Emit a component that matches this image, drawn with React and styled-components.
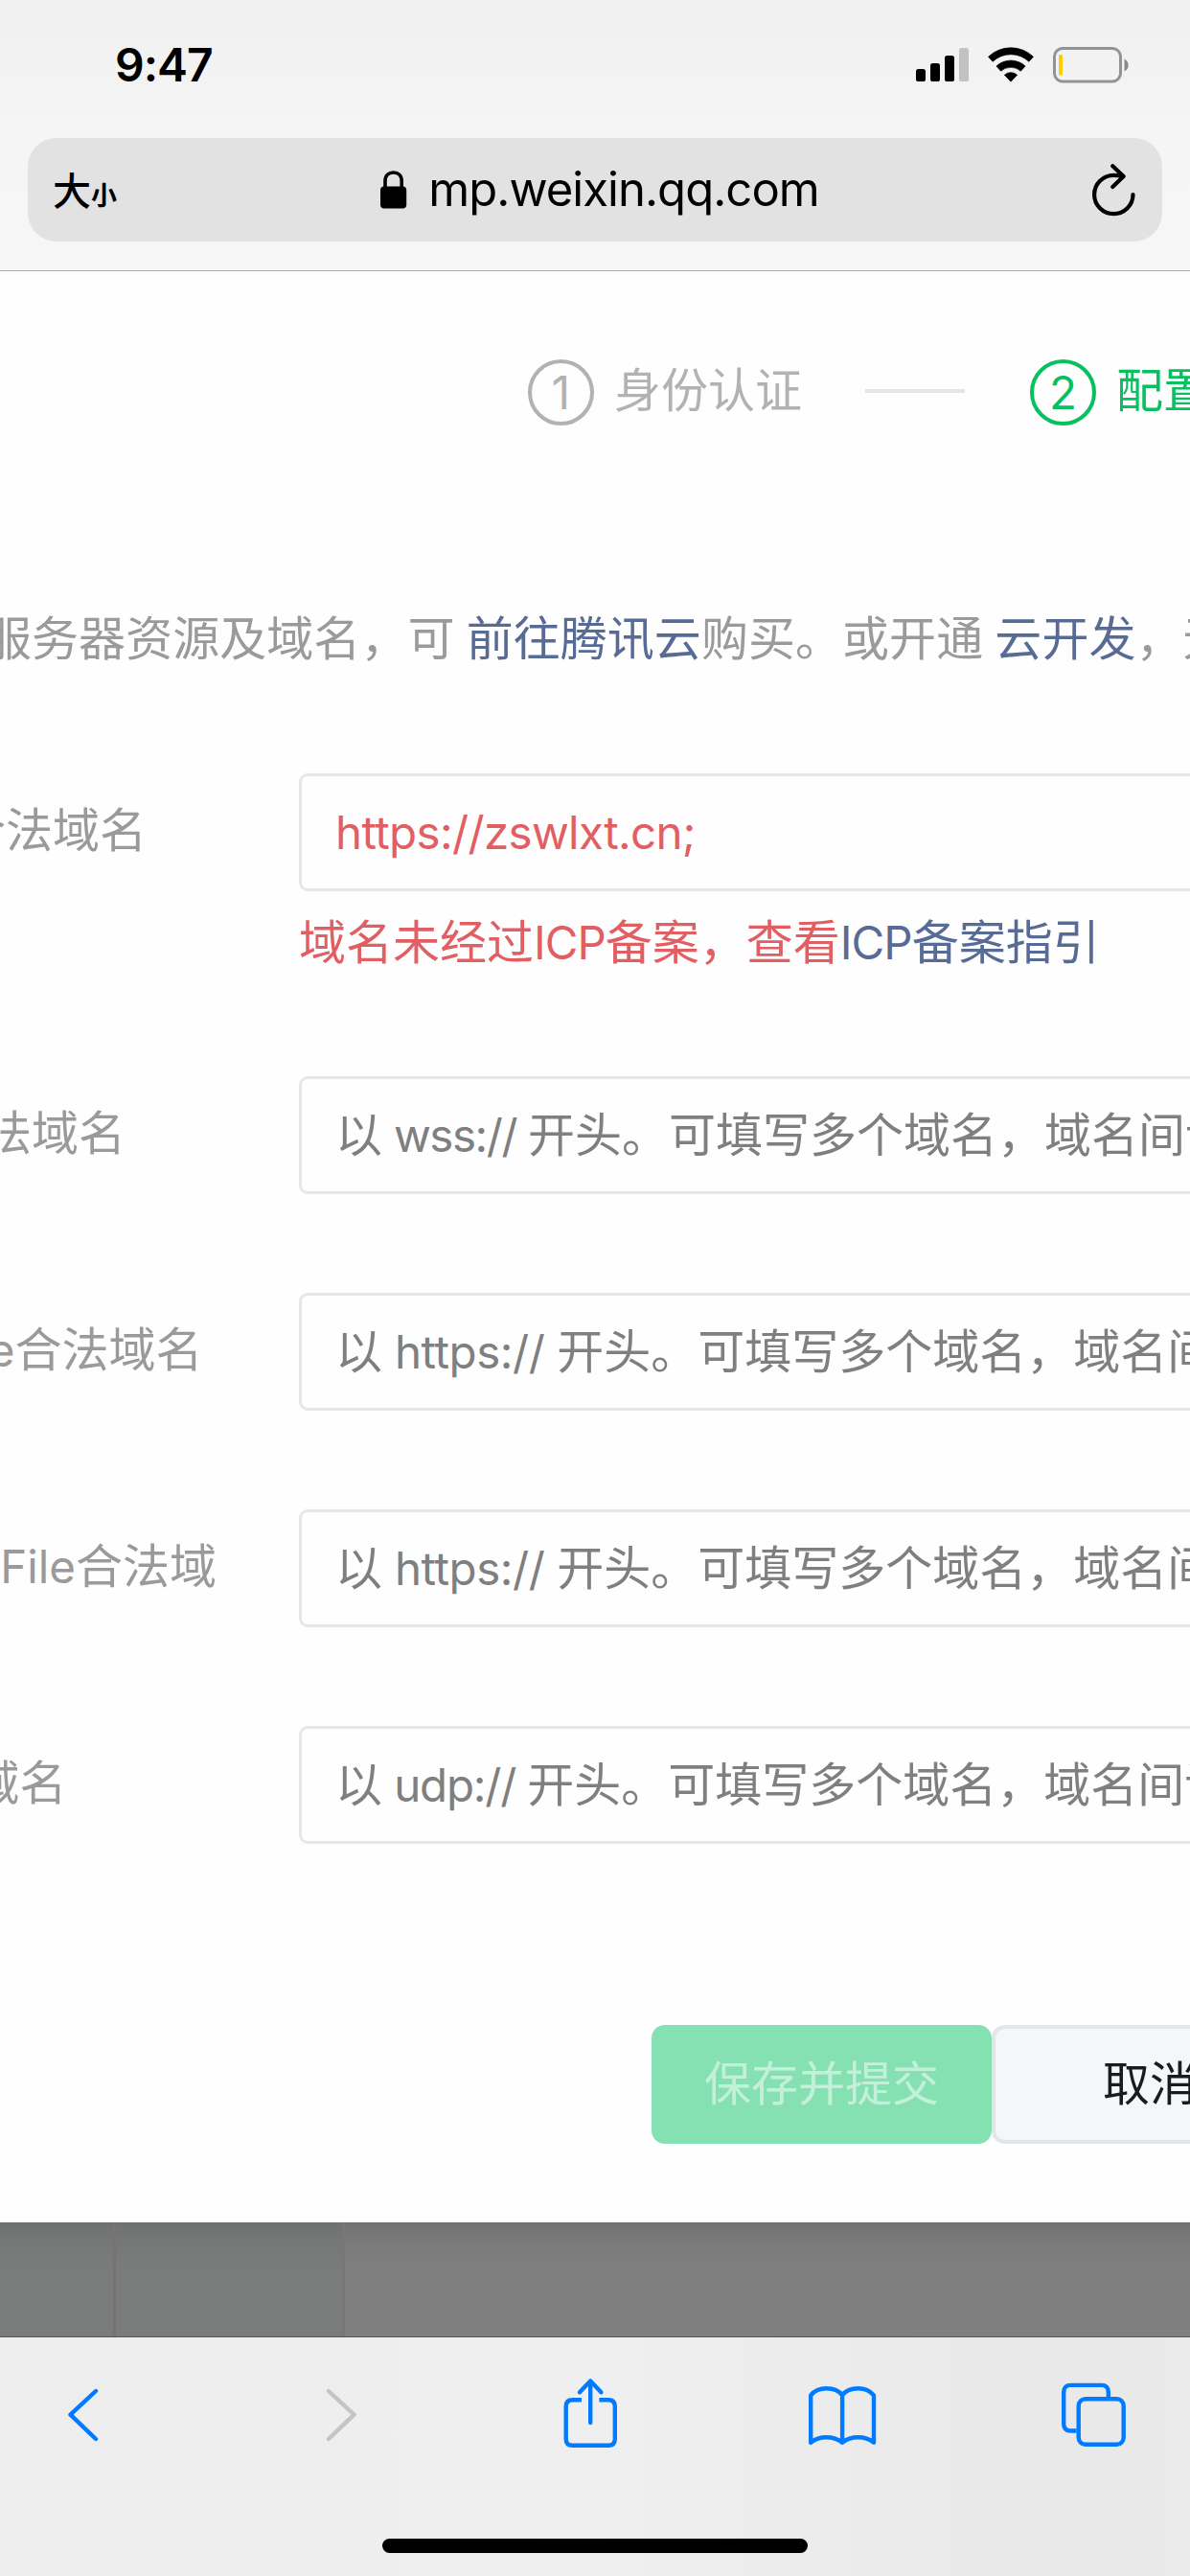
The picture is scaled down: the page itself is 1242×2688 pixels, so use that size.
import React from "react";
import styled, { createGlobalStyle } from "styled-components";

const Global = createGlobalStyle`
  * { box-sizing: border-box; }
  html, body { margin: 0; padding: 0; overflow: hidden; }
  body {
    font-family: Inter, "Noto Sans CJK SC", sans-serif;
    font-size: 49px;
    line-height: 68px;
    background: #fefefe;
  }
`;

const Screen = styled.div`
  width: 1242px;
  height: 2688px;
  overflow: hidden;
  display: flex;
  flex-direction: column;
`;

/* ---------- browser header ---------- */
const Header = styled.header`
  flex: none;
  height: 283px;
  border-bottom: 1px solid #b0b0b1;
  background: linear-gradient(#f0f0f0, #f5f5f5 50%, #f7f7f7);
`;

const StatusBar = styled.div`
  height: 144px;
  display: flex;
  align-items: flex-start;
  justify-content: space-between;
  padding: 34px 62px 0 120px;
`;

const Clock = styled.span`
  font-size: 48px;
  font-weight: 600;
  letter-spacing: -1px;
  color: #000;
`;

const StatusIcons = styled.div`
  display: flex;
  align-items: center;
  padding-top: 15px;
  gap: 20px;
`;

const AddressBar = styled.div`
  margin: 0 29px;
  height: 108px;
  border-radius: 30px;
  background: #e2e2e2;
  display: grid;
  grid-template-columns: 200px 1fr 200px;
  align-items: center;
  color: #000;
`;

const TextSize = styled.div`
  padding: 3px 0 0 26px;
  font-family: "Noto Sans CJK SC", sans-serif;
  font-weight: 500;
  font-size: 40px;
  white-space: nowrap;
`;

const SmallGlyph = styled.span`
  font-size: 27px;
  font-weight: 700;
`;

const Domain = styled.div`
  display: flex;
  align-items: center;
  justify-content: center;
  gap: 22px;
  padding-left: 10px;
  font-size: 49px;
  letter-spacing: -0.95px;
`;

const ReloadSlot = styled.div`
  display: flex;
  justify-content: flex-end;
  padding: 6px 26px 0 0;
`;

/* ---------- page ---------- */
const Page = styled.main`
  flex: none;
  height: 2036px;
  background: #fefefe;
  overflow: hidden;
  white-space: nowrap;
`;

const Steps = styled.div`
  display: flex;
  align-items: center;
  height: 69px;
  margin: 92px 0 0 551px;
  width: max-content;
`;

const StepNumber = styled.span`
  width: 69px;
  height: 69px;
  border-radius: 50%;
  border: 4px solid currentColor;
  display: flex;
  align-items: center;
  justify-content: center;
  font-size: 47.5px;
`;

const Step = styled.div`
  display: flex;
  align-items: center;
  gap: 21px;
  height: 69px;
  color: ${(p) => (p.$active ? "#07c160" : "#b2b2b2")};
`;

const StepName = styled.span`
  margin-top: -4px;
`;

const StepLine = styled.span`
  width: 104px;
  height: 4px;
  margin: 0 68px 3px 66px;
  background: #e4e5e5;
`;

const Notice = styled.p`
  margin: 189px 0 0 -16px;
  color: #9a9a9a;
  letter-spacing: 0.05px;
  word-spacing: -1.7px;
`;

const Link = styled.a`
  color: #576b95;
`;

const Form = styled.div`
  margin-top: 106px;
`;

const Row = styled.div`
  display: flex;
  align-items: flex-start;
  height: ${(p) => p.$height}px;
`;

const LabelCell = styled.div`
  flex: none;
  width: 572px;
  margin-left: -260px;
`;

const Label = styled.div`
  width: ${(p) => p.$end + 260}px;
  line-height: 119px;
  text-align: right;
  color: #9a9a9a;
`;

const Latin = styled.span`
  font-size: 47.5px;
  letter-spacing: ${(p) => p.$spacing || 0}px;
`;

const Field = styled.div`
  flex: none;
  width: 1100px;
`;

const Input = styled.div`
  height: 123px;
  border: 3px solid #e7e7eb;
  border-radius: 9px;
  padding: 0 0 0 35px;
  line-height: 118px;
  color: ${(p) => (p.$error ? "#e15f63" : "#7f7f7f")};
`;

const ErrorText = styled.div`
  margin-top: 20px;
  color: #e15f63;
`;

const Actions = styled.div`
  display: flex;
  margin: 86px 0 0 680px;
  width: max-content;
`;

const Button = styled.div`
  height: 124px;
  width: ${(p) => p.$width}px;
  border-radius: 14px;
  line-height: ${(p) => (p.$primary ? 124 : 116)}px;
  text-align: center;
  border: ${(p) => (p.$primary ? "none" : "4px solid #e4e5e7")};
  background: ${(p) => (p.$primary ? "#85e1b1" : "#f5f6f8")};
  color: ${(p) => (p.$primary ? "#c3f0d8" : "#1a1b1c")};
`;

/* ---------- dimmed page behind the dialog ---------- */
const Backdrop = styled.div`
  flex: none;
  height: 120px;
  display: flex;
  border-bottom: 1px solid #555656;
  background: linear-gradient(rgba(0, 0, 0, 0.1), rgba(0, 0, 0, 0.03) 24px, rgba(0, 0, 0, 0) 48px), #7f7f7f;
`;

const BackdropColumn = styled.div`
  width: ${(p) => p.$width}px;
  border-right: 3px solid ${(p) => p.$edge};
  background: linear-gradient(rgba(0, 0, 0, 0.09), rgba(0, 0, 0, 0.03) 24px, rgba(0, 0, 0, 0) 48px), #7a7c7b;
`;

/* ---------- browser toolbar ---------- */
const Toolbar = styled.footer`
  flex: 1;
  display: flex;
  flex-direction: column;
  align-items: center;
  background: linear-gradient(90deg, #ededed, #efefef 50%, #e9e9e9 85%, #eaeaea);
`;

const ToolbarIcons = styled.nav`
  width: 100%;
  height: 210px;
  padding: 36px 0 0 66px;
  display: flex;
  align-items: flex-start;
`;

const ToolIcon = styled.svg`
  flex: none;
  width: ${(p) => p.$width}px;
  height: 90px;
  margin-left: ${(p) => p.$gap || 0}px;
  fill: none;
  stroke: ${(p) => (p.$disabled ? "#c4c4c4" : "#007aff")};
  stroke-width: 4.4;
  stroke-linecap: round;
  stroke-linejoin: round;
`;

const HomeIndicator = styled.div`
  width: 444px;
  height: 15px;
  border-radius: 8px;
  background: #000;
`;

const Signal = () => (
  <svg width="55" height="38" viewBox="0 0 55 38">
    <rect x="0" y="23" width="10" height="13" rx="2.6" />
    <rect x="15" y="17" width="10" height="19" rx="2.6" />
    <rect x="30" y="9" width="10" height="27" rx="2.6" />
    <rect x="45" y="1" width="10" height="35" rx="2.6" fill="#c2c2c2" />
  </svg>
);

const Wifi = () => (
  <svg width="48" height="38" viewBox="0 0 48 38">
    <path d="M0.6 10.2 A34 34 0 0 1 47.4 10.2 L42.9 15.2 A27.5 27.5 0 0 0 5.1 15.2 Z" strokeLinejoin="round" stroke="#000" strokeWidth="0.8" />
    <path d="M8.9 20 A22.2 22.2 0 0 1 39.1 20 L34.4 25.2 A15.8 15.8 0 0 0 13.6 25.2 Z" stroke="#000" strokeWidth="0.6" />
    <path d="M17.3 29.2 A10 10 0 0 1 30.7 29.2 L24 36.2 Z" stroke="#000" strokeWidth="0.6" strokeLinejoin="round" />
  </svg>
);

const Battery = () => (
  <svg width="81" height="38" viewBox="0 0 81 38">
    <rect x="1.5" y="1.5" width="69" height="34.5" rx="8.5" fill="none" stroke="#939393" strokeWidth="3" />
    <path d="M74.5 12.5 Q78.6 14.5 78.6 19 Q78.6 23.5 74.5 25.5 Z" fill="#8a8a8a" />
    <rect x="6" y="8" width="4" height="21.5" rx="1" fill="#ffcc00" />
  </svg>
);

const Lock = () => (
  <svg width="28" height="42" viewBox="0 0 28 42">
    <path d="M5 20 V12 C5 6 8.6 3 13.6 3 C18.6 3 22.2 6 22.2 12 V20" fill="none" stroke="#000" strokeWidth="3.6" />
    <rect x="0" y="17.5" width="27.2" height="23" rx="4" />
  </svg>
);

const Reload = () => (
  <svg width="50" height="60" viewBox="0 0 50 60" fill="none" stroke="#000" strokeWidth="4.2" strokeLinecap="round" strokeLinejoin="round">
    <path d="M45.5 32 A20.2 20.2 0 1 1 25.3 11.8 C28.5 11.8 31 12.1 35 13" />
    <path d="M24.3 2.2 L35.6 13 L24.3 24" />
  </svg>
);

const FIELDS = [
  { prefix: "socket", name: "合法域名", end: 131, scheme: "wss://", spacing: -1.45 },
  { prefix: "uploadFile", name: "合法域名", end: 211.5, scheme: "https://", spacing: -0.45 },
  { prefix: "downloadFile", name: "合法域", end: 226, scheme: "https://", spacing: -0.45 },
  { prefix: "udp", name: "合法域名", end: 69.5, scheme: "udp://", spacing: -1.2 },
];

export default function App() {
  return (
    <Screen>
      <Global />
      <Header>
        <StatusBar>
          <Clock>9:47</Clock>
          <StatusIcons>
            <Signal />
            <Wifi />
            <Battery />
          </StatusIcons>
        </StatusBar>
        <AddressBar>
          <TextSize>
            大<SmallGlyph>小</SmallGlyph>
          </TextSize>
          <Domain>
            <Lock />
            <span>mp.weixin.qq.com</span>
          </Domain>
          <ReloadSlot>
            <Reload />
          </ReloadSlot>
        </AddressBar>
      </Header>

      <Page>
        <Steps>
          <Step>
            <StepNumber>1</StepNumber>
            <StepName>身份认证</StepName>
          </Step>
          <StepLine />
          <Step $active>
            <StepNumber>2</StepNumber>
            <StepName>配置服务器信息</StepName>
          </Step>
        </Steps>

        <Notice>
          服务器资源及域名，可 <Link>前往腾讯云</Link>购买。或开通 <Link>云开发</Link>，无需
        </Notice>

        <Form>
          <Row $height={316}>
            <LabelCell>
              <Label $end={153}>
                <Latin>request</Latin>合法域名
              </Label>
            </LabelCell>
            <Field>
              <Input $error>
                <Latin $spacing={-0.65}>https://zswlxt.cn;</Latin>
              </Input>
              <ErrorText>
                域名未经过<Latin $spacing={-1}>ICP</Latin>备案，查看
                <Link>
                  <Latin $spacing={-1}>ICP</Latin>备案指引
                </Link>
              </ErrorText>
            </Field>
          </Row>
          {FIELDS.map((f) => (
            <Row key={f.prefix} $height={226}>
              <LabelCell>
                <Label $end={f.end}>
                  <Latin>{f.prefix}</Latin>
                  {f.name}
                </Label>
              </LabelCell>
              <Field>
                <Input>
                  以<Latin $spacing={f.spacing}>{` ${f.scheme} `}</Latin>开头。可填写多个域名，域名间请用；分隔
                </Input>
              </Field>
            </Row>
          ))}
        </Form>

        <Actions>
          <Button $primary $width={355}>保存并提交</Button>
          <Button $width={330}>取消</Button>
        </Actions>
      </Page>

      <Backdrop>
        <BackdropColumn $width={121} $edge="#747478" />
        <BackdropColumn $width={239} $edge="#777778" />
      </Backdrop>

      <Toolbar>
        <ToolbarIcons>
          <ToolIcon $width={40} viewBox="0 0 40 90">
            <path d="M34 20 L7.5 44.7 L34 70" />
          </ToolIcon>
          <ToolIcon $width={40} $gap={230} $disabled viewBox="0 0 40 90">
            <path d="M7 20 L33.5 44.7 L7 70" />
          </ToolIcon>
          <ToolIcon $width={64} $gap={208} viewBox="0 0 64 90">
            <path d="M23 29.2 H13.5 Q6.7 29.2 6.7 36 V70 Q6.7 76.8 13.5 76.8 H51 Q57.8 76.8 57.8 70 V36 Q57.8 29.2 51 29.2 H41.4" strokeLinecap="butt" />
            <path d="M32.2 53 V9.5 M21 21.3 L32.2 9.5 L43.4 21.3" />
          </ToolIcon>
          <ToolIcon $width={76} $gap={193} viewBox="0 0 76 90">
            <path d="M5.2 73.8 V24.5 Q11 17.3 21.5 17.3 Q33 17.3 38.1 24.5 Q43.2 17.3 54.7 17.3 Q65 17.3 71 24.5 V73.8 Q64 68.3 54.7 68.3 Q45 68.3 38.1 73.8 Q31 68.3 21.5 68.3 Q12 68.3 5.2 73.8 Z M38.1 24.5 V73.8" />
          </ToolIcon>
          <ToolIcon $width={76} $gap={186} viewBox="0 0 76 90">
            <path d="M20.5 61.5 H14.5 Q7.2 61.5 7.2 54.2 V21.2 Q7.2 13.9 14.5 13.9 H46.5 Q53.8 13.9 53.8 21.2 V28" strokeLinecap="butt" />
            <rect x="22.7" y="28.2" width="47" height="47.6" rx="7.2" />
          </ToolIcon>
        </ToolbarIcons>
        <HomeIndicator />
      </Toolbar>
    </Screen>
  );
}
